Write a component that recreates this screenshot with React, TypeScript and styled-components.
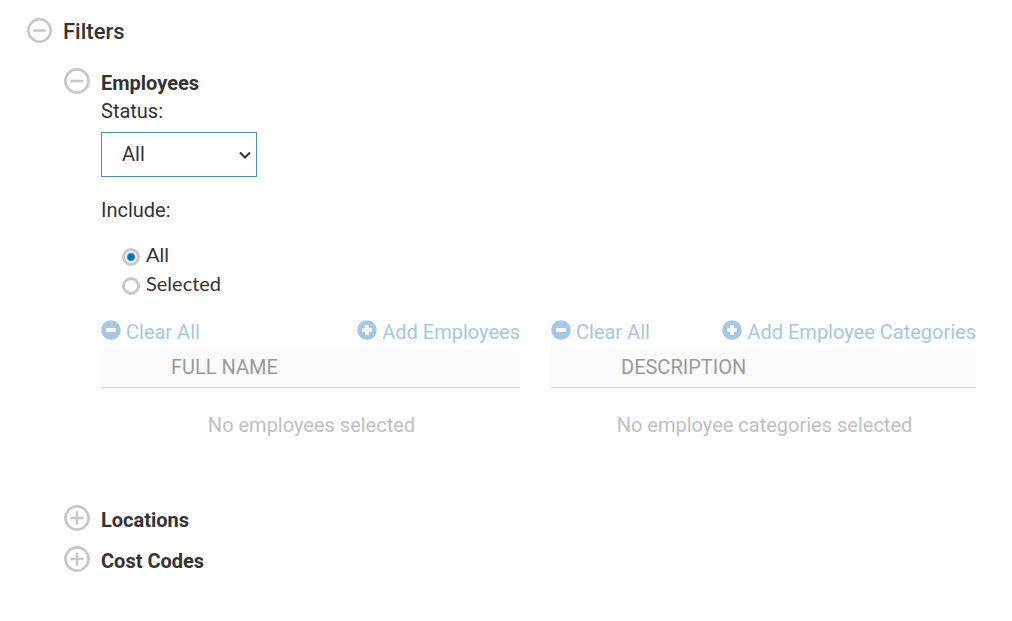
import React, { useState } from "react";
import styled, { createGlobalStyle } from "styled-components";

const GlobalStyle = createGlobalStyle`
  *, *::before, *::after { box-sizing: border-box; }
  body {
    margin: 0;
    background: #fff;
    color: #333;
    font-family: Roboto, "Liberation Sans", sans-serif;
    font-size: 20px;
    line-height: 28px;
  }
`;

const Page = styled.main`
  padding: 16px 36px 32px 27px;
`;

const Toggle = styled.button`
  display: flex;
  align-items: center;
  gap: 11px;
  padding: 0;
  border: 0;
  background: none;
  color: inherit;
  font: inherit;
  cursor: pointer;

  svg {
    flex: none;
    margin: -2px 0 2px;
  }
`;

const Title = styled.h1`
  margin: 0;
  font-size: 22px;
  font-weight: 500;
  line-height: 32px;

  svg {
    width: 25px;
    height: 25px;
    margin: 0 0 3px;
  }
`;

const Groups = styled.div`
  padding: 21px 0 0 37px;
`;

const GroupTitle = styled.h2`
  margin: 0;
  font-size: 20px;
  font-weight: 700;
  line-height: 28px;

  & + & {
    margin-top: 13px;
  }
`;

const GroupBody = styled.div`
  padding: 0 0 67px 37px;
`;

const FieldLabel = styled.label`
  display: block;
`;

const SelectBox = styled.div`
  display: grid;
  align-items: center;
  width: 156px;
  margin: 7px 0 19px;

  > * {
    grid-area: 1 / 1;
  }

  svg {
    justify-self: end;
    margin-right: 6px;
    pointer-events: none;
  }
`;

const Select = styled.select`
  appearance: none;
  width: 100%;
  height: 45px;
  padding: 0 24px 2px 20px;
  border: 1px solid #4a90c8;
  border-radius: 0;
  background: #fff;
  color: #333;
  font: inherit;
`;

const RadioGroup = styled.fieldset`
  margin: 0 0 20px;
  padding: 0;
  border: 0;
`;

const Legend = styled.legend`
  padding: 0;
  margin-bottom: 16px;
`;

const RadioLabel = styled.label`
  display: flex;
  align-items: center;
  gap: 6px;
  width: max-content;
  margin-left: 21px;
  font-family: Lato, sans-serif;
  line-height: 29px;
`;

const Radio = styled.input`
  appearance: none;
  width: 18px;
  height: 18px;
  margin: 5px 0 0;
  border: 3px solid #c8c8c8;
  border-radius: 50%;
  background: #fff;

  &:checked {
    background: radial-gradient(circle, #0072c6 0 3px, #fff 5px);
  }
`;

const Panels = styled.div`
  display: grid;
  grid-template-columns: 419fr 425fr;
  gap: 31px;
`;

const Actions = styled.div`
  display: flex;
  justify-content: space-between;
  margin-bottom: 3px;
`;

const Action = styled.button`
  display: flex;
  align-items: center;
  gap: 5px;
  padding: 0;
  border: 0;
  background: none;
  color: #a5c7e3;
  font: inherit;

  svg {
    flex: none;
    margin-bottom: 4px;
  }
`;

const Table = styled.table`
  width: 100%;
  border-collapse: separate;
  border-spacing: 0;
`;

const HeadCell = styled.th`
  height: 39px;
  padding: 0 0 2px 70px;
  border-bottom: 1px solid #dcdcdc;
  background: #fbfbfb;
  color: #999;
  font-weight: 400;
  text-align: left;
`;

const EmptyCell = styled.td`
  padding: 23px 0 0 2px;
  color: #c0c0c0;
  text-align: center;
`;

function OutlineIcon({ open }: { open: boolean }) {
  return (
    <svg width="26" height="26" viewBox="0 0 26 26" fill="none" stroke="#c6c6c6" aria-hidden="true">
      <circle cx="13" cy="13" r="11.6" strokeWidth="2.6" />
      <path d={open ? "M6.5 13h13" : "M6.5 13h13M13 6.5v13"} strokeWidth="2.6" />
    </svg>
  );
}

function SolidIcon({ kind }: { kind: "plus" | "minus" }) {
  return (
    <svg width="20" height="20" viewBox="0 0 20 20" aria-hidden="true">
      <circle cx="10" cy="10" r="9.8" fill="#a5c7e3" />
      {kind === "minus" ? (
        <rect x="5" y="8" width="10" height="4" rx="0.8" fill="#fff" />
      ) : (
        <path d="M8.2 5h3.6v3.2H15v3.6h-3.2V15H8.2v-3.2H5V8.2h3.2z" fill="#fff" />
      )}
    </svg>
  );
}

function Panel({ add, heading, empty }: { add: string; heading: string; empty: string }) {
  return (
    <div>
      <Actions>
        <Action type="button">
          <SolidIcon kind="minus" />
          Clear All
        </Action>
        <Action type="button">
          <SolidIcon kind="plus" />
          {add}
        </Action>
      </Actions>
      <Table>
        <thead>
          <tr>
            <HeadCell scope="col">{heading}</HeadCell>
          </tr>
        </thead>
        <tbody>
          <tr>
            <EmptyCell>{empty}</EmptyCell>
          </tr>
        </tbody>
      </Table>
    </div>
  );
}

export default function App() {
  const [include, setInclude] = useState("All");

  return (
    <Page>
      <GlobalStyle />
      <Title>
        <Toggle type="button" aria-expanded="true">
          <OutlineIcon open />
          Filters
        </Toggle>
      </Title>
      <Groups>
        <GroupTitle>
          <Toggle type="button" aria-expanded="true">
            <OutlineIcon open />
            Employees
          </Toggle>
        </GroupTitle>
        <GroupBody>
          <FieldLabel htmlFor="status">Status:</FieldLabel>
          <SelectBox>
            <Select id="status" defaultValue="All">
              <option>All</option>
              <option>Active</option>
              <option>Inactive</option>
            </Select>
            <svg width="12" height="8" viewBox="0 0 12 8" fill="none" stroke="#333" strokeWidth="2" aria-hidden="true">
              <path d="M1 1.5l5 5 5-5" />
            </svg>
          </SelectBox>
          <RadioGroup>
            <Legend>Include:</Legend>
            {["All", "Selected"].map((option) => (
              <RadioLabel key={option}>
                <Radio
                  type="radio"
                  name="include"
                  checked={include === option}
                  onChange={() => setInclude(option)}
                />
                {option}
              </RadioLabel>
            ))}
          </RadioGroup>
          <Panels>
            <Panel add="Add Employees" heading="FULL NAME" empty="No employees selected" />
            <Panel
              add="Add Employee Categories"
              heading="DESCRIPTION"
              empty="No employee categories selected"
            />
          </Panels>
        </GroupBody>
        {["Locations", "Cost Codes"].map((name) => (
          <GroupTitle key={name}>
            <Toggle type="button" aria-expanded="false">
              <OutlineIcon open={false} />
              {name}
            </Toggle>
          </GroupTitle>
        ))}
      </Groups>
    </Page>
  );
}
